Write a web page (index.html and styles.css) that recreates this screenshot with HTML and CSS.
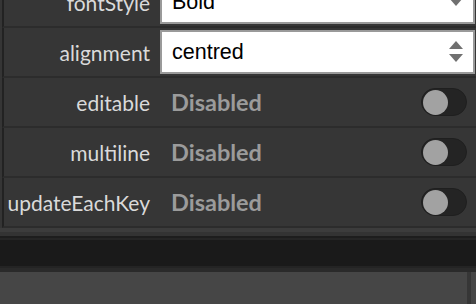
FILE: index.html
```html
<!DOCTYPE html>
<html>
<head>
<meta charset="utf-8">
<link rel="stylesheet" href="styles.css">
</head>
<body>
<div class="screen">
  <div class="props">
    <div class="row">
      <div class="label">fontStyle</div>
      <div class="select">
        <span class="select-text">Bold</span>
        <svg class="arrow" width="14" height="22" viewBox="0 0 14 22"><polygon points="0,7 14,7 7,15" fill="#707070"/></svg>
      </div>
    </div>
    <div class="row">
      <div class="label">alignment</div>
      <div class="select">
        <span class="select-text">centred</span>
        <svg class="arrow" width="14" height="22" viewBox="0 0 14 22"><polygon points="7,0 14,8 0,8" fill="#707070"/><polygon points="0,13 14,13 7,21" fill="#707070"/></svg>
      </div>
    </div>
    <div class="row">
      <div class="label">editable</div>
      <div class="toggle-cell">
        <span class="state">Disabled</span>
        <span class="switch"><span class="knob"></span></span>
      </div>
    </div>
    <div class="row">
      <div class="label">multiline</div>
      <div class="toggle-cell">
        <span class="state">Disabled</span>
        <span class="switch"><span class="knob"></span></span>
      </div>
    </div>
    <div class="row">
      <div class="label">updateEachKey</div>
      <div class="toggle-cell">
        <span class="state">Disabled</span>
        <span class="switch"><span class="knob"></span></span>
      </div>
    </div>
  </div>
  <div class="footer">
    <div class="band b1"></div>
    <div class="band b2"></div>
    <div class="band b3"></div>
    <div class="band b4"></div>
    <div class="band b5"></div>
    <div class="band b6"></div>
    <div class="band b7"></div>
  </div>
  <div class="lower">
    <div class="lower-main"></div>
    <div class="lower-divider"></div>
    <div class="lower-side"></div>
  </div>
</div>
</body>
</html>
```

FILE: styles.css
```css
html, body {
  margin: 0;
  padding: 0;
  background: #464646;
}

.screen {
  width: 476px;
  height: 304px;
  overflow: hidden;
  display: flex;
  flex-direction: column;
}

.props {
  margin-top: -22px;
  padding-left: 2px;
  background: #353535;
}

.row {
  display: grid;
  grid-template-columns: 146px 1fr;
  column-gap: 10px;
  align-items: center;
  height: 48px;
  border-left: 2px solid #222222;
  border-bottom: 2px solid #2c2c2c;
  background: #363636;
}

.label {
  text-align: right;
  font-family: Lato, "Liberation Sans", sans-serif;
  font-size: 21px;
  color: #dadada;
  white-space: nowrap;
}

.select {
  height: 44px;
  box-sizing: border-box;
  margin-right: 1px;
  border: 2px solid #9a9a9a;
  background: #ffffff;
  display: flex;
  align-items: center;
  justify-content: space-between;
  padding: 0 10px;
}

.select-text {
  font-family: "Liberation Sans", Arial, sans-serif;
  font-size: 21.5px;
  color: #000000;
}

.arrow {
  display: block;
}

.toggle-cell {
  display: flex;
  align-items: center;
  justify-content: space-between;
  padding-left: 11px;
  padding-right: 9px;
}

.state {
  font-family: Lato, "Liberation Sans", sans-serif;
  font-weight: bold;
  font-size: 23.5px;
  color: #9b9b9b;
}

.switch {
  width: 46px;
  height: 28px;
  box-sizing: border-box;
  border-radius: 14px;
  background: #242424;
  border: 1px solid #1f1f1f;
  padding: 0 1px;
  display: flex;
  align-items: center;
}

.knob {
  width: 25px;
  height: 25px;
  border-radius: 50%;
  background: #a2a2a2;
}

.footer {
  display: flex;
  flex-direction: column;
}

.band { width: 100%; }
.b1 { height: 4px; background: #3c3c3c; }
.b2 { height: 4px; background: #333333; }
.b3 { height: 2px; background: #1d1d1d; }
.b4 { height: 2px; background: #252525; }
.b5 { height: 26px; background: #1a1a1a; }
.b6 { height: 2px; background: #242424; }
.b7 { height: 4px; background: #2a2a2a; }

.lower {
  flex: 1;
  display: flex;
}

.lower-main {
  width: 467px;
  background: #464646;
}

.lower-divider {
  width: 4px;
  background: #363636;
}

.lower-side {
  flex: 1;
  background: #464646;
}
```
